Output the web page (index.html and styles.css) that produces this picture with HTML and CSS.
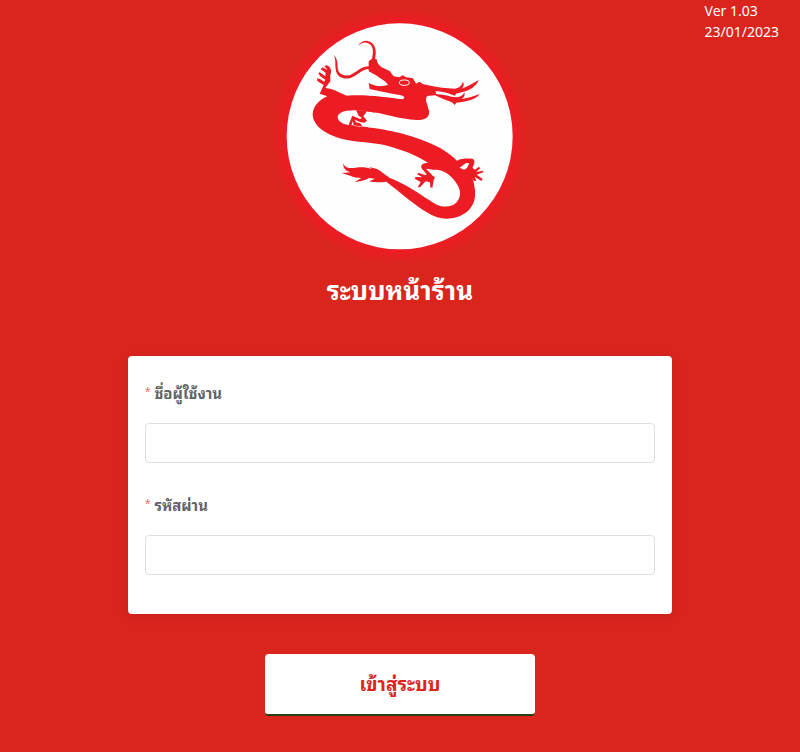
FILE: index.html
```html
<!DOCTYPE html>
<html lang="th">
<head>
    <meta charset="UTF-8">
    <meta name="viewport" content="width=device-width, initial-scale=1.0">
    <title>ระบบหน้าร้าน</title>
    <link rel="stylesheet" href="styles.css">
</head>
<body>
    <div class="version">
        <div>Ver 1.03</div>
        <div>23/01/2023</div>
    </div>

    <main class="login">
        <!-- Logo -->
        <svg class="logo" viewBox="0 0 720 720" aria-hidden="true">
            <defs>
                <radialGradient id="glow">
                    <stop offset="0.89" stop-color="#ed1c24"/>
                    <stop offset="1" stop-color="#ed1c24" stop-opacity="0"/>
                </radialGradient>
            </defs>
            <circle cx="359" cy="361" r="386" fill="url(#glow)"/>
            <circle class="logo-disc" cx="359" cy="361" r="339"/>
            <g class="dragon">
                <!-- head, horns and body -->
                <path d="M150 218 C168 222 182 232 200 239 C250 234 320 243 368 250 C378 244 374 238 345 235 L300 226 L269 219 L266 201 C282 211 304 213 324 207 C318 195 302 189 288 178 L266 166 L266 136 L278 127 L290 130 C291 142 297 148 305 154 L329 165 L341 181 L358 184 L368 178 L379 184 L399 187 L408 203 L418 197 L428 204 C455 211 480 215 505 217 L525 218 C540 215 546 206 549 197 C554 206 549 214 545 218 C565 211 580 200 596 192 C590 210 570 223 545 229 L528 233 L525 239 L512 235 C500 229 485 227 467 225 L468 234 C485 236 500 238 515 242 L530 244 C545 242 550 236 553 229 C556 238 551 245 546 249 C565 246 582 240 599 234 C590 248 570 254 540 259 L529 260 L524 267 L516 259 L490 249 L465 238 L441 240 C434 251 442 264 447 284 C450 302 438 312 410 312 C360 311 310 290 255 286 L246 333 C315 337 410 358 482 397 C503 409 520 424 531 434 C544 427 560 427 577 428 C585 431 585 440 578 454 L570 469 C579 490 587 512 585 540 C582 581 545 608 500 608 C450 608 400 560 319 497 L323 484 C380 503 440 550 470 566 C490 574 515 575 530 559 C550 534 539 510 515 484 C500 468 482 460 461 461 L438 458 L459 480 L465 484 L461 492 L457 516 L451 514 L450 499 L437 496 L420 514 L413 514 L422 498 L404 488 L407 483 L427 484 L412 475 L415 470 L437 478 L440 475 L424 456 C422 446 428 441 445 441 C410 417 370 404 335 393 C300 381 250 380 200 372 C140 360 98 330 98 295 C99 267 122 250 142 241 L119 233 L131 207 L112 195 L111 187 L120 189 L132 197 L136 191 L121 181 L115 172 L119 169 L136 181 L137 170 L122 160 L128 154 L143 163 L133 150 L140 148 C154 153 156 167 151 177 L151 196 L136 216 Z"/>
                <!-- whiskers -->
                <path d="M284 132 C292 105 287 78 259 74 C249 74 239 80 234 90 C247 76 262 76 273 88 C281 98 280 114 275 132 Z"/>
                <path d="M268 151 C240 151 229 171 208 178 C187 181 174 171 173 157 C173 142 172 127 161 117 C168 129 165 143 167 159 C169 182 187 190 209 187 C231 181 243 159 268 159 Z"/>
                <!-- hind foot -->
                <path d="M548 462 L568 446 L584 461 L596 453 L602 456 L588 468 L609 464 L610 469 L590 476 L608 489 L604 495 L584 482 L589 494 L582 495 L570 478 Z"/>
                <!-- tail tuft -->
                <path d="M327 484 C314 477 306 466 291 459 L267 453 L277 460 C247 448 228 457 207 456 C196 454 192 449 190 442 C189 458 196 464 211 469 L185 471 L211 479 C219 484 233 485 244 486 L224 498 C244 495 257 493 267 486 L285 488 L267 496 C284 500 302 499 319 497 Z"/>
            </g>
            <g class="cutout">
                <path d="M258 285 C201 278 173 287 173 304 C174 320 193 325 207 328 C230 333 252 332 262 336 L262 285 Z"/>
                <path d="M539 455 L558 441 L568 442 L561 456 L552 461 Z"/>
            </g>
            <!-- front leg inside the first bend -->
            <path class="dragon" d="M228 282 L236 299 L246 306 L240 309 L217 299 L206 326 L214 328 L219 315 L221 330 L242 334 L246 328 L240 322 L228 319 L224 311 L240 318 L253 320 L261 314 L250 301 L262 284 Z M240 333 L300 340 L262 345 Z M256 284 L285 290 L275 278 Z M206 326 L265 334 L265 342 L206 338 Z"/>
            <ellipse class="eye" cx="373" cy="200" rx="15" ry="8"/>
        </svg>

        <h1>ระบบหน้าร้าน</h1>

        <form id="login-form">
            <div class="card">
                <div class="form-item">
                    <label for="username">ชื่อผู้ใช้งาน</label>
                    <input type="text" id="username" name="username" required>
                </div>
                <div class="form-item">
                    <label for="password">รหัสผ่าน</label>
                    <input type="password" id="password" name="password" required>
                </div>
            </div>
            <button type="submit">เข้าสู่ระบบ</button>
        </form>
    </main>
</body>
</html>
```
FILE: styles.css
```css
* {
    box-sizing: border-box;
}
body {
    margin: 0;
    background-color: #da251d;
    font-family: "Noto Sans Thai Looped", "Leelawadee UI", Loma, Waree, "Noto Sans", sans-serif;
    font-size: 14px;
}
.version {
    position: absolute;
    top: 0;
    right: 21px;
    color: #fff;
    font-family: "Noto Sans", sans-serif;
    line-height: 21px;
}
.login {
    display: flex;
    flex-direction: column;
    align-items: center;
    padding: 16px 16px 36px;
}
.logo {
    width: 240px;
    height: 240px;
    overflow: visible;
}
.logo-disc {
    fill: #fefefe;
}
.dragon {
    fill: #ed1c24;
}
.cutout {
    fill: #fefefe;
}
.eye {
    fill: none;
    stroke: #fefefe;
    stroke-width: 3;
}
h1 {
    margin: 14px 0 50px;
    color: #fff;
    font-size: 26px;
    line-height: 36px;
}
form {
    display: flex;
    flex-direction: column;
    align-items: center;
    width: 100%;
}
.card {
    width: 100%;
    max-width: 544px;
    padding: 17px 17px 39px;
    background-color: #fff;
    border-radius: 4px;
    box-shadow: 0 2px 12px rgba(0, 0, 0, 0.1);
}
.form-item + .form-item {
    margin-top: 22px;
}
label {
    display: flex;
    align-items: center;
    height: 38px;
    margin-bottom: 12px;
    color: #606266;
    font-size: 15px;
    font-weight: bold;
    line-height: 38px;
}
.form-item label::before {
    content: "*";
    margin-right: 4px;
    color: #f56c6c;
    font-family: "Liberation Sans", Arial, sans-serif;
    font-size: 14px;
    font-weight: normal;
}
input {
    display: block;
    width: 100%;
    height: 40px;
    padding: 0 15px;
    border: 1px solid #dcdfe6;
    border-radius: 4px;
    color: #606266;
    font: inherit;
}
input:focus {
    outline: none;
    border-color: #da251d;
}
button {
    width: 270px;
    height: 62px;
    margin-top: 40px;
    padding: 0 0 4px;
    background-color: #fff;
    color: #da251d;
    border: none;
    border-bottom: 2px solid #24400f;
    border-radius: 4px;
    font-family: inherit;
    font-size: 19px;
    font-weight: bold;
    cursor: pointer;
}
button:hover {
    background-color: #fbeeee;
}
```
